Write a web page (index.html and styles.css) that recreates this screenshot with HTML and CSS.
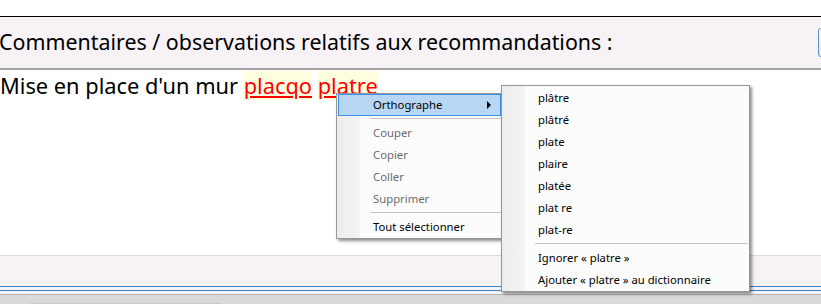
FILE: index.html
```html
<!DOCTYPE html>
<html lang="fr">
<head>
<meta charset="utf-8">
<title>Commentaires</title>
<link rel="stylesheet" href="styles.css">
</head>
<body>
<div class="page">
  <div class="top"></div>
  <div class="header">
    <div class="title">Commentaires / observations relatifs aux recommandations :</div>
    <div class="hbtn"></div>
  </div>
  <div class="content">
    <p class="line">Mise en place d'un mur <span class="err">placqo</span> <span class="err">platre</span></p>
  </div>
  <div class="band"></div>
  <div class="rule"></div>
  <div class="bottom"><div class="tab"></div></div>

  <div class="menu menu-main">
    <div class="item active">Orthographe<span class="arrow"></span></div>
    <div class="sep"></div>
    <div class="item disabled">Couper</div>
    <div class="item disabled">Copier</div>
    <div class="item disabled">Coller</div>
    <div class="item disabled">Supprimer</div>
    <div class="sep"></div>
    <div class="item">Tout sélectionner</div>
  </div>

  <div class="menu menu-sub">
    <div class="item">plâtre</div>
    <div class="item">plâtré</div>
    <div class="item">plate</div>
    <div class="item">plaire</div>
    <div class="item">platée</div>
    <div class="item">plat re</div>
    <div class="item">plat-re</div>
    <div class="sep"></div>
    <div class="item">Ignorer « platre »</div>
    <div class="item">Ajouter « platre » au dictionnaire</div>
  </div>
</div>
</body>
</html>
```
FILE: styles.css
```css
html, body {
  margin: 0;
  padding: 0;
  background: #ffffff;
}
.page {
  position: relative;
  width: 821px;
  height: 304px;
  overflow: hidden;
  font-family: "Noto Sans", "Open Sans", sans-serif;
  color: #000;
}
.top {
  height: 16px;
  background: #fff;
}
.header {
  display: flex;
  align-items: center;
  height: 51px;
  border-top: 1px solid #000;
  border-bottom: 2px solid #a3a3a3;
  background: #f6f2f6;
}
.title {
  font-size: 21.4px;
  margin-left: -1px;
  margin-top: -2px;
  white-space: nowrap;
  line-height: 30px;
}
.hbtn {
  margin-left: auto;
  margin-right: -21px;
  width: 22px;
  height: 27px;
  border: 1px solid #5b8fc9;
  border-radius: 3px;
  background: linear-gradient(#fbfbfb, #e6e6e6);
}
.content {
  height: 185px;
  background: #fff;
}
.line {
  margin: 0;
  padding-top: 1px;
  font-size: 21.8px;
  line-height: 30px;
  white-space: nowrap;
}
.err {
  color: #ff0000;
  background: #ffffe0;
  text-decoration: underline;
  text-decoration-color: #ff0000;
}
.band {
  height: 30px;
  border-top: 1px solid #dcdcdc;
  background: #f6f2f6;
}
.rule {
  box-sizing: content-box;
  height: 3px;
  border-top: 1px solid #3a84c4;
  border-bottom: 1px solid #3a84c4;
  background: #f6f2f6;
}
.bottom {
  border-top: 3px solid #f6f2f6;
  height: 20px;
  background: #d9d9d9;
  box-shadow: inset 0 1px 0 #b4b4b4;
  padding-left: 27px;
  padding-top: 9px;
}
.bottom .tab {
  width: 195px;
  height: 10px;
  border: 1px solid #c8c8c8;
  border-radius: 4px;
  background: #ececec;
}
.menu {
  position: absolute;
  background: #fcfcfc linear-gradient(to right, #ececec 0, #f3f3f3 22px, #fcfcfc 24px);
  background-repeat: no-repeat;
  border: 1px solid #979797;
  box-shadow: 2px 2px 3px rgba(0, 0, 0, 0.45);
  padding: 0 1px;
  font-family: "Noto Sans", "Open Sans", sans-serif;
  font-size: 11.3px;
}
.menu-main {
  left: 336px;
  top: 93px;
  width: 163px;
}
.menu-sub {
  left: 501px;
  top: 85px;
  width: 245px;
  padding-top: 1px;
}
.item {
  position: relative;
  height: 22px;
  line-height: 22px;
  padding-left: 35px;
  white-space: nowrap;
  box-sizing: border-box;
}
.item.disabled {
  color: #6d6d6d;
}
.item.active {
  background: #b8d7f4;
  border: 1px solid #3a8ee6;
  line-height: 20px;
  padding-left: 34px;
}
.arrow {
  position: absolute;
  right: 9px;
  top: 6px;
  width: 0;
  height: 0;
  border-top: 4px solid transparent;
  border-bottom: 4px solid transparent;
  border-left: 4px solid #000;
}
.sep {
  height: 6px;
  margin-left: 32px;
  position: relative;
}
.sep::after {
  content: "";
  position: absolute;
  left: 0;
  right: 0;
  top: 2px;
  height: 1px;
  background: #c5c5c5;
}
```
